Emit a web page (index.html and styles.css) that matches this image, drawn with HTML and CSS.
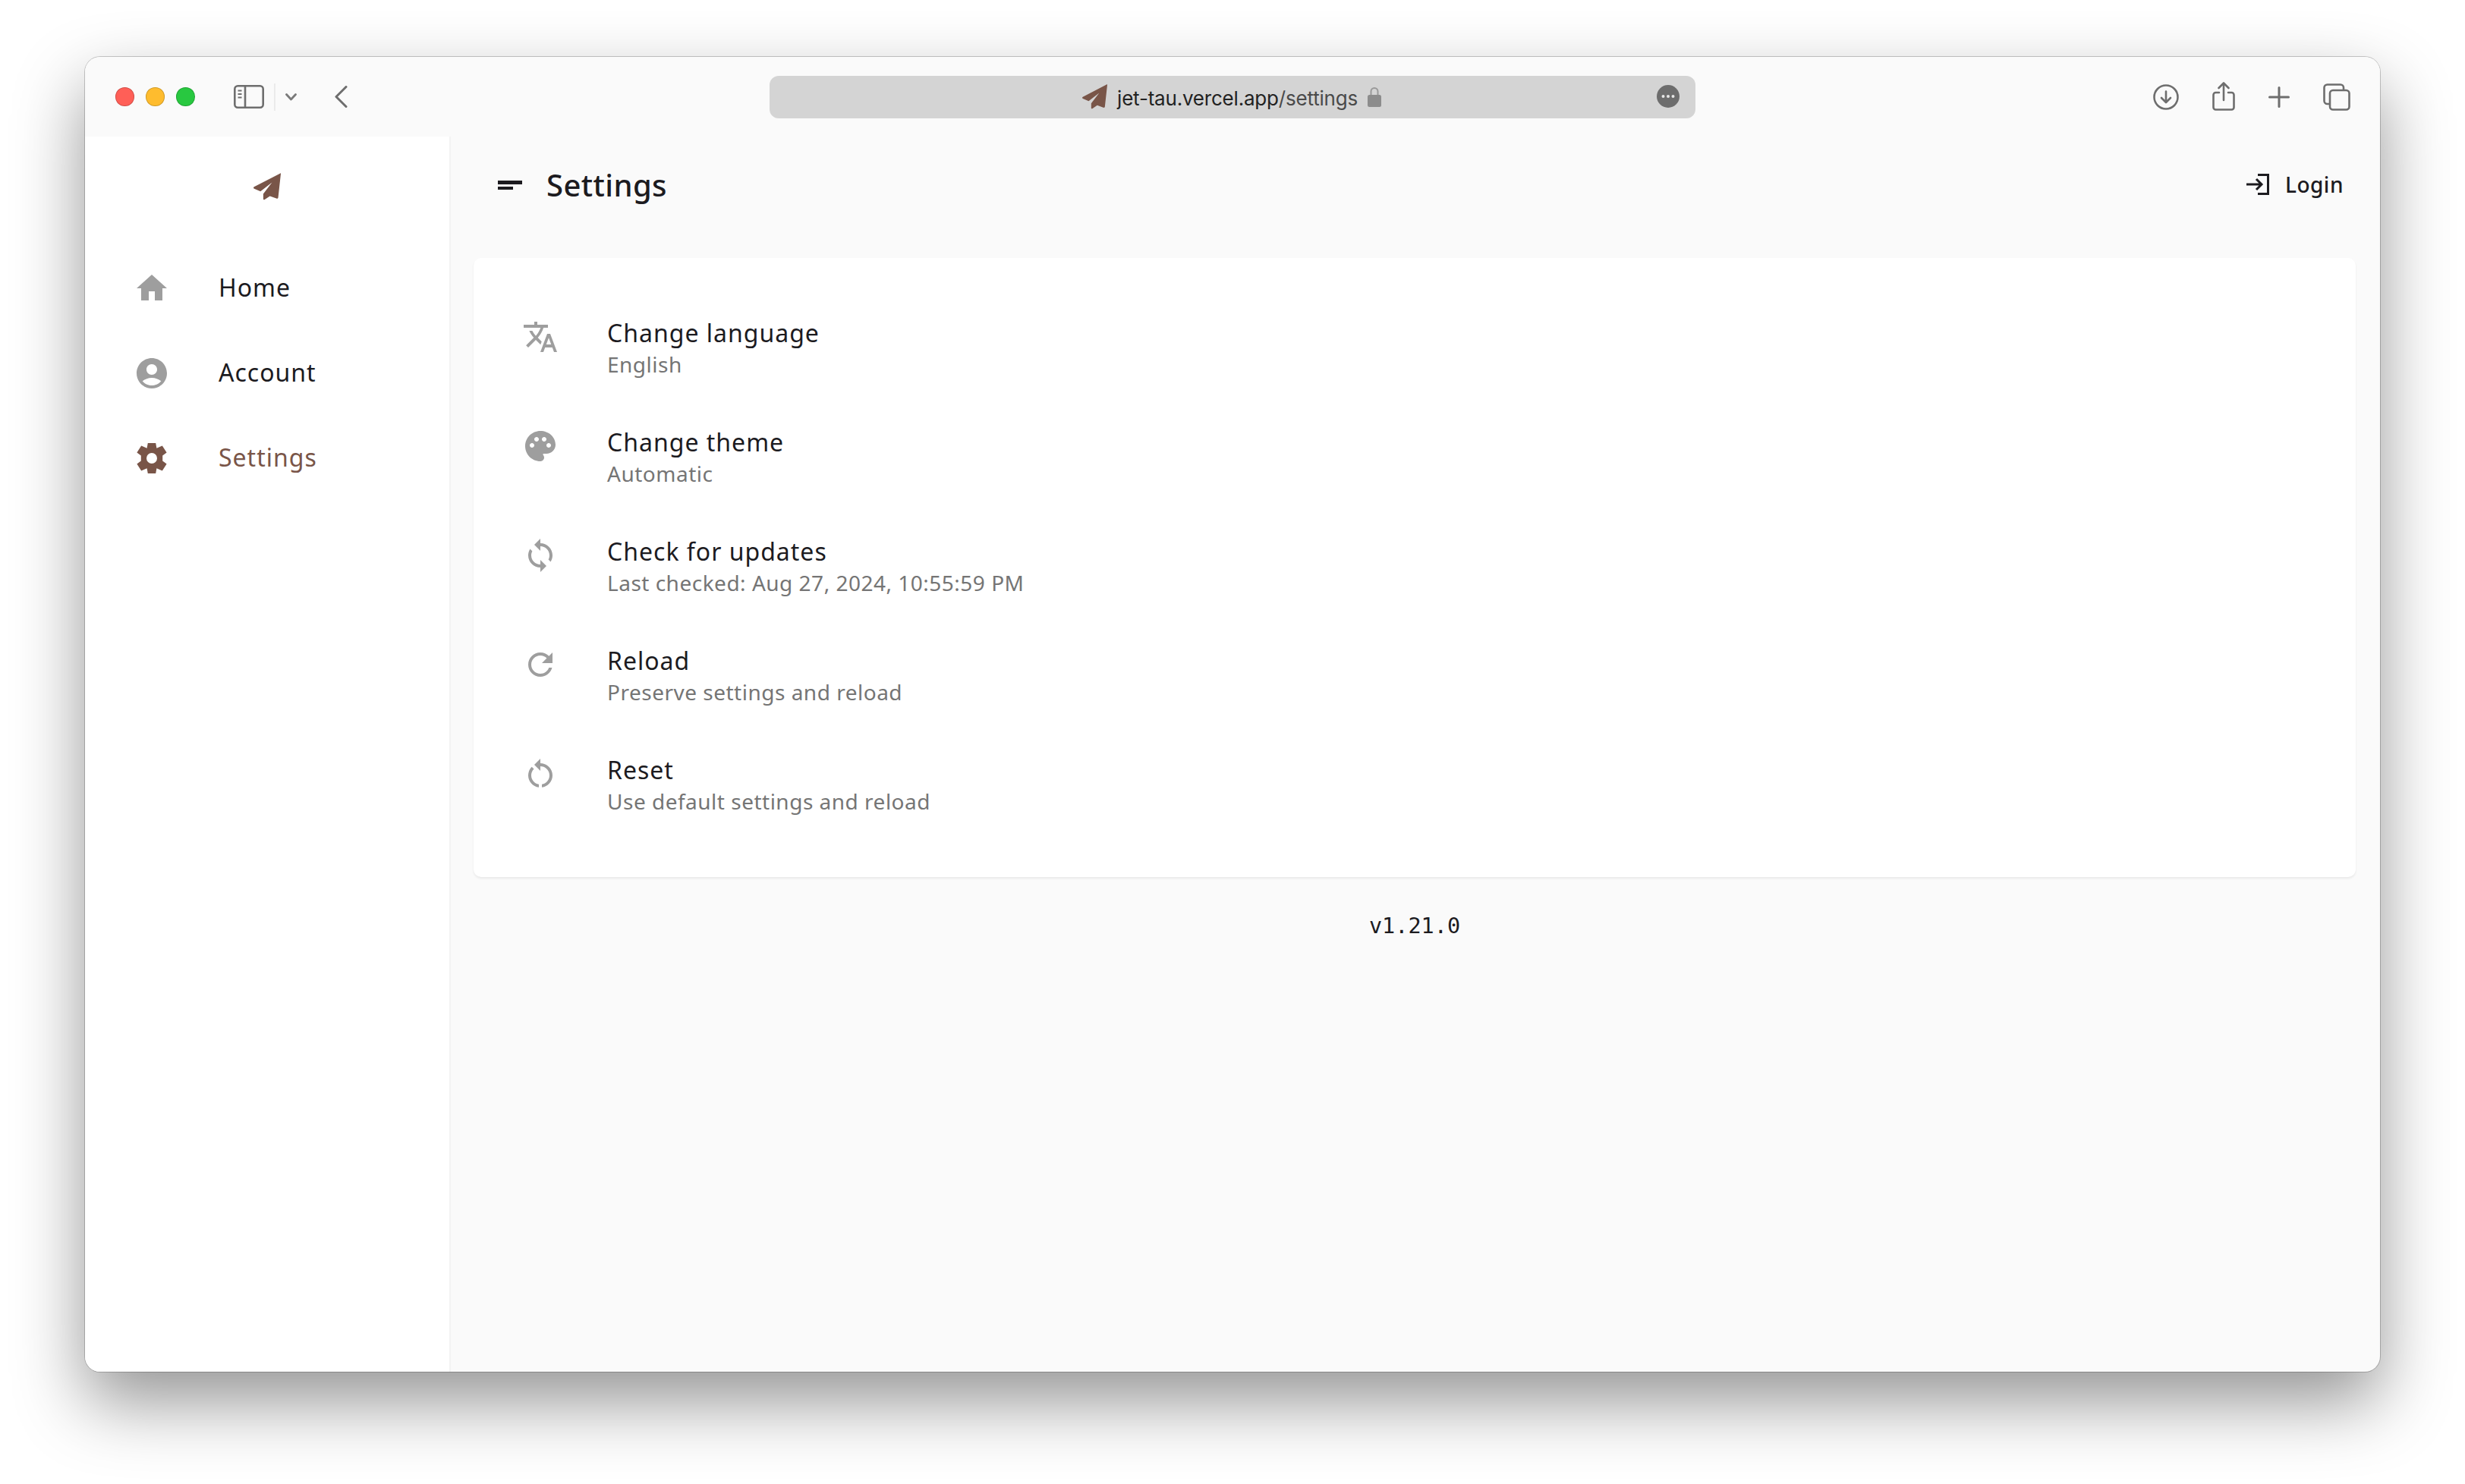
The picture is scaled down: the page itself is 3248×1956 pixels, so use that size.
FILE: index.html
```html
<!DOCTYPE html>
<html lang="en">
<head>
<meta charset="utf-8">
<title>Settings</title>
<link rel="stylesheet" href="styles.css">
</head>
<body>
<svg class="defs" width="0" height="0" aria-hidden="true">
  <symbol id="plane" viewBox="0 0 36 36">
    <path d="M35.4.4c.5-.2.7.1.6.6L32.6 32c-.1 1.5-1 2.1-2.4 1.6L21.6 30.4 14.8 35c-1 .6-1.9.1-1.9-1V27.6L24.4 12.6 9.2 24.2 1 20.8C-.2 20.200-.3 19 .8 18.300z"/>
  </symbol>
</svg>
<div class="window">
  <header class="chrome">
    <div class="chrome-left">
      <div class="lights">
        <span class="light light-red"></span>
        <span class="light light-yellow"></span>
        <span class="light light-green"></span>
      </div>
      <svg class="ic-sidebar" width="40" height="31" viewBox="0 0 40 31" fill="none" stroke="#6e6e6e" stroke-width="2.600">
        <rect x="1.300" y="1.300" width="37.400" height="28.400" rx="4"/>
        <path d="M15 1.300v28.400"/>
        <path d="M5.500 7.500h5M5.500 12h5M5.500 16.500h5" stroke-width="2"/>
      </svg>
      <span class="chrome-sep"></span>
      <svg class="ic-chev" width="15" height="10" viewBox="0 0 15 10" fill="none" stroke="#7a7a7a" stroke-width="2.800" stroke-linecap="round" stroke-linejoin="round">
        <path d="M1.500 1.500 7.500 8l6-6.500"/>
      </svg>
      <svg class="ic-back" width="17" height="29" viewBox="0 0 17 29" fill="none" stroke="#6e6e6e" stroke-width="3" stroke-linecap="round" stroke-linejoin="round">
        <path d="M15 1.500 2 14.500l13 13"/>
      </svg>
    </div>
    <div class="urlbar">
      <svg class="url-fav" width="33" height="33"><use href="#plane"/></svg>
      <span class="url-text"><span class="url-host">jet-tau.vercel.app</span><span class="url-path">/settings</span></span>
      <svg class="url-lock" width="18" height="27" viewBox="0 0 18 27" fill="none">
        <path d="M4.500 13V6.500a4.500 4.500 0 0 1 9 0V13" stroke="#9a9a9a" stroke-width="2"/>
        <rect x="0" y="11" width="18" height="16" rx="2.500" fill="#8c8c8c"/>
      </svg>
      <svg class="url-more" width="30" height="30" viewBox="0 0 30 30">
        <circle cx="15" cy="15" r="15" fill="#6d6d6d"/>
        <circle cx="8.500" cy="15" r="2" fill="#e6e6e6"/>
        <circle cx="15" cy="15" r="2" fill="#e6e6e6"/>
        <circle cx="21.500" cy="15" r="2" fill="#e6e6e6"/>
      </svg>
    </div>
    <div class="chrome-right">
      <svg width="34" height="34" viewBox="0 0 34 34" fill="none" stroke="#6e6e6e" stroke-width="2.600" stroke-linecap="round" stroke-linejoin="round">
        <circle cx="17" cy="17" r="15.500"/>
        <path d="M17 9.500v14M11 18l6 6 6-6"/>
      </svg>
      <svg class="ic-share" width="30" height="38" viewBox="0 0 30 38" fill="none" stroke="#6e6e6e" stroke-width="2.600" stroke-linecap="round" stroke-linejoin="round">
        <path d="M9 14H4.500A3 3 0 0 0 1.500 17v16.500a3 3 0 0 0 3 3h21a3 3 0 0 0 3-3V17a3 3 0 0 0-3-3H21"/>
        <path d="M15 24V2M8.500 8 15 1.500 21.500 8"/>
      </svg>
      <svg width="28" height="28" viewBox="0 0 28 28" fill="none" stroke="#6e6e6e" stroke-width="3" stroke-linecap="round">
        <path d="M14 1.500v25M1.500 14h25"/>
      </svg>
      <svg width="36" height="36" viewBox="0 0 36 36" fill="none" stroke="#6e6e6e" stroke-width="2.600" stroke-linejoin="round">
        <rect x="9" y="9" width="25.500" height="25.500" rx="4"/>
        <path d="M9 27H5.500a4 4 0 0 1-4-4V5.500a4 4 0 0 1 4-4H23a4 4 0 0 1 4 4V9"/>
      </svg>
    </div>
  </header>

  <div class="app">
    <aside class="sidebar">
      <div class="logo-row">
        <svg class="logo" width="36" height="36"><use href="#plane"/></svg>
      </div>
      <nav class="nav">
        <a class="nav-item">
          <svg class="icon" viewBox="0 0 24 24"><path d="M10 20v-6h4v6h5v-8h3L12 3 2 12h3v8z"/></svg>
          <span class="nav-label">Home</span>
        </a>
        <a class="nav-item">
          <svg class="icon" viewBox="0 0 24 24"><path d="M12 2C6.480 2 2 6.480 2 12s4.480 10 10 10 10-4.480 10-10S17.520 2 12 2zm0 4c1.930 0 3.500 1.570 3.500 3.500S13.930 13 12 13s-3.500-1.570-3.500-3.500S10.070 6 12 6zm0 14c-2.030 0-4.430-.82-6.140-2.880C7.550 15.800 9.680 15 12 15s4.450.8 6.140 2.120C16.430 19.180 14.030 20 12 20z"/></svg>
          <span class="nav-label">Account</span>
        </a>
        <a class="nav-item nav-item-active">
          <svg class="icon" viewBox="0 0 24 24"><path fill-rule="evenodd" d="M9.400 2h5.200l.6 3.400 3.700-1.600 2.900 4.400-2.700 2.100v3.400l2.700 2.100-2.900 4.400-3.700-1.600-.6 3.400H9.400l-.6-3.400-3.700 1.600-2.900-4.400 2.700-2.100v-3.400L2.200 8.200l2.900-4.400 3.700 1.600zM12 8.500a3.500 3.500 0 1 0 0 7 3.500 3.500 0 1 0 0-7z"/></svg>
          <span class="nav-label">Settings</span>
        </a>
      </nav>
    </aside>

    <main class="main">
      <div class="appbar">
        <span class="menu-icon"><span class="menu-line menu-line-long"></span><span class="menu-line menu-line-short"></span></span>
        <h1 class="page-title">Settings</h1>
        <a class="login">
          <svg width="30" height="28" viewBox="0 0 30 28" fill="none" stroke="#1c1b1f" stroke-width="3">
            <path d="M15 1.500h13.500v25H15"/>
            <path d="M0 14h20M13 7l7 7-7 7"/>
          </svg>
          <span>Login</span>
        </a>
      </div>

      <section class="card">
        <div class="tile">
          <svg class="icon" viewBox="0 0 24 24"><path d="M12.870 15.070l-2.540-2.510.03-.03c1.740-1.940 2.980-4.170 3.710-6.530H17V4h-7V2H8v2H1v1.990h11.170C11.500 7.920 10.440 9.750 9 11.350 8.070 10.320 7.300 9.190 6.690 8h-2c.73 1.630 1.730 3.170 2.980 4.560l-5.090 5.020L4 19l5-5 3.110 3.110.76-2.040zM18.500 10h-2L12 22h2l1.120-3h4.750L21 22h2l-4.500-12zm-2.620 7l1.620-4.330L19.120 17h-3.240z"/></svg>
          <div class="tile-text"><div class="tile-title">Change language</div><div class="tile-sub">English</div></div>
        </div>
        <div class="tile">
          <svg class="icon" viewBox="0 0 24 24"><path d="M12 2C6.490 2 2 6.490 2 12s4.490 10 10 10c1.380 0 2.500-1.120 2.500-2.500 0-.61-.23-1.200-.64-1.670-.08-.1-.13-.21-.13-.33 0-.28.22-.5.5-.5H16c3.310 0 6-2.690 6-6 0-4.960-4.490-9-10-9zm-5.500 11c-.83 0-1.500-.67-1.500-1.500S5.670 10 6.500 10 8 10.670 8 11.500 7.330 13 6.500 13zm3-4C8.670 9 8 8.330 8 7.500S8.670 6 9.500 6s1.500.67 1.500 1.500S10.330 9 9.500 9zm5 0c-.83 0-1.500-.67-1.500-1.500S13.670 6 14.500 6s1.500.67 1.500 1.500S15.330 9 14.500 9zm3 4c-.83 0-1.500-.67-1.500-1.500s.67-1.500 1.500-1.500 1.500.67 1.500 1.500-.67 1.500-1.500 1.500z"/></svg>
          <div class="tile-text"><div class="tile-title">Change theme</div><div class="tile-sub">Automatic</div></div>
        </div>
        <div class="tile">
          <svg class="icon" viewBox="0 0 24 24"><path d="M12 4V1L8 5l4 4V6c3.310 0 6 2.690 6 6 0 1.010-.25 1.970-.7 2.800l1.460 1.460C19.540 15.030 20 13.570 20 12c0-4.420-3.580-8-8-8zm0 14c-3.310 0-6-2.690-6-6 0-1.010.25-1.970.7-2.800L5.240 7.740C4.460 8.970 4 10.430 4 12c0 4.420 3.580 8 8 8v3l4-4-4-4v3z"/></svg>
          <div class="tile-text"><div class="tile-title">Check for updates</div><div class="tile-sub">Last checked: Aug 27, 2024, 10:55:59 PM</div></div>
        </div>
        <div class="tile">
          <svg class="icon" viewBox="0 0 24 24"><path d="M17.650 6.350C16.200 4.900 14.210 4 12 4c-4.420 0-7.990 3.580-7.990 8s3.570 8 7.990 8c3.730 0 6.840-2.550 7.730-6h-2.080c-.82 2.330-3.040 4-5.650 4-3.310 0-6-2.690-6-6s2.690-6 6-6c1.660 0 3.140.69 4.220 1.780L13 11h7V4l-2.350 2.350z"/></svg>
          <div class="tile-text"><div class="tile-title">Reload</div><div class="tile-sub">Preserve settings and reload</div></div>
        </div>
        <div class="tile">
          <svg class="icon" viewBox="0 0 24 24"><path d="M12 5V2L8 6l4 4V7c3.310 0 6 2.690 6 6 0 2.970-2.170 5.430-5 5.910v2.020c3.950-.49 7-3.850 7-7.930 0-4.420-3.580-8-8-8zm-6 8c0-1.650.67-3.150 1.760-4.240L6.340 7.340C4.900 8.790 4 10.790 4 13c0 4.080 3.050 7.440 7 7.930v-2.020c-2.830-.48-5-2.940-5-5.910z"/></svg>
          <div class="tile-text"><div class="tile-title">Reset</div><div class="tile-sub">Use default settings and reload</div></div>
        </div>
      </section>

      <div class="version">v1.21.0</div>
    </main>
  </div>
</div>
</body>
</html>
```

FILE: styles.css
```css
* { box-sizing: border-box; }

html {
  height: 100%;
  background: #fff;
}

body {
  margin: 0;
  min-height: 100%;
  padding: 75px 112px 0;
  font-family: "Noto Sans", sans-serif;
  color: #1c1b1f;
}

.defs { position: absolute; }

.window {
  width: 3024px;
  height: 1733px;
  display: flex;
  flex-direction: column;
  border-radius: 20px;
  overflow: hidden;
  background: #fafafa;
  box-shadow: 0 0 0 1px rgba(0, 0, 0, .2), 0 40px 92px rgba(0, 0, 0, .42);
}

/* Browser chrome */
.chrome {
  height: 105px;
  flex: none;
  display: flex;
  align-items: center;
  background: #fafafa;
}

.chrome-left {
  width: 902px;
  flex: none;
  display: flex;
  align-items: center;
  padding-left: 40px;
}

.lights {
  display: flex;
  gap: 15.500px;
}

.light {
  width: 24.500px;
  height: 24.500px;
  border-radius: 50%;
  border: 1px solid rgba(0, 0, 0, .18);
}

.light-red { background: #ff5f57; }
.light-yellow { background: #febc2e; }
.light-green { background: #28c840; }

.ic-sidebar { margin-left: 51px; }

.chrome-sep {
  width: 2px;
  height: 36px;
  margin-left: 13px;
  background: #ebebeb;
}

.ic-chev { margin-left: 13px; }
.ic-back { margin-left: 50px; }

.urlbar {
  width: 1220px;
  height: 56px;
  flex: none;
  position: relative;
  display: flex;
  align-items: center;
  justify-content: center;
  gap: 13px;
  padding-right: 2px;
  background: #d4d4d4;
  border-radius: 12px;
}

.url-fav { fill: #795548; }

.url-text {
  font-family: Inter, "Liberation Sans", sans-serif;
  font-size: 26px;
  line-height: 32px;
  letter-spacing: -.2px;
  padding-top: 4px;
}

.url-host { color: #222; }
.url-path { color: #4a4a4a; }

.url-more {
  position: absolute;
  right: 21px;
  top: 12px;
}

.chrome-right {
  flex: 1;
  display: flex;
  align-items: center;
  justify-content: flex-end;
  gap: 44px;
  padding-right: 39px;
}

.ic-share { margin-top: -2px; }

/* App */
.app {
  flex: 1;
  display: flex;
  min-height: 0;
}

.sidebar {
  width: 482px;
  flex: none;
  background: #fff;
  border-right: 2px solid #f3f3f3;
}

.logo-row {
  height: 144px;
  display: flex;
  justify-content: center;
  padding-top: 48px;
}

.logo { fill: #795548; }

.nav-item {
  height: 112px;
  display: flex;
  align-items: center;
  gap: 64px;
  padding-left: 64px;
  font-size: 32px;
  letter-spacing: 1px;
  color: #1c1b1f;
}

.nav-label { margin-top: -3px; }

.icon {
  width: 48px;
  height: 48px;
  flex: none;
  fill: #9e9e9e;
}

.nav-item-active { color: #795548; }
.nav-item-active .icon { fill: #795548; }

.main {
  flex: 1;
  min-width: 0;
  padding: 0 32px 0 30px;
}

.appbar {
  height: 160px;
  display: flex;
  align-items: center;
  padding: 0 16px 32px 32px;
}

.menu-icon {
  width: 32px;
  display: flex;
  flex-direction: column;
  gap: 3px;
  margin-right: 32px;
}

.menu-line {
  height: 4.500px;
  background: #1c1b1f;
}

.menu-line-long { width: 32px; }
.menu-line-short { width: 20px; }

.page-title {
  flex: 1;
  margin: -2px 0 0;
  font-size: 40px;
  letter-spacing: .4px;
  font-weight: 500;
  color: #1c1b1f;
}

.login {
  display: flex;
  align-items: center;
  gap: 21px;
  margin-top: -2px;
  font-size: 28px;
  font-weight: 500;
  letter-spacing: .5px;
}

.card {
  height: 816px;
  padding: 48px 0;
  background: #fff;
  border-radius: 10px;
  box-shadow: 0 2px 3px rgba(0, 0, 0, .07);
}

.tile {
  height: 144px;
  display: flex;
  gap: 64px;
  padding: 32px 0 0 64px;
}

.tile-text { margin-top: -5px; }

.tile-title {
  font-size: 32px;
  line-height: 48px;
  letter-spacing: 1px;
  color: #1c1b1f;
}

.tile-sub {
  font-size: 28px;
  line-height: 35px;
  letter-spacing: .5px;
  color: #757575;
}

.version {
  margin-top: 48px;
  text-align: center;
  font-family: "DejaVu Sans Mono", monospace;
  font-size: 28.500px;
  line-height: 34px;
  color: #1c1b1f;
}
```
